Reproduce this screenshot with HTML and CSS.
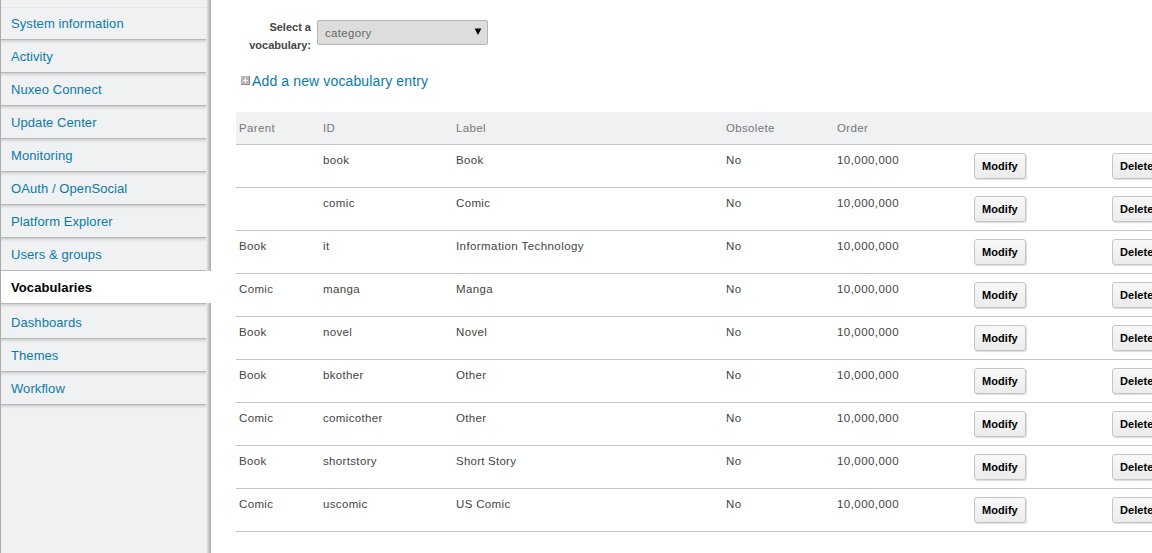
FILE: index.html
```html
<!DOCTYPE html>
<html lang="en">
<head>
<meta charset="utf-8">
<title>Vocabularies</title>
<link rel="stylesheet" href="styles.css">
</head>
<body>
<div class="page">
  <nav class="sidebar">
    <a class="item">System information</a>
    <a class="item">Activity</a>
    <a class="item">Nuxeo Connect</a>
    <a class="item">Update Center</a>
    <a class="item">Monitoring</a>
    <a class="item">OAuth / OpenSocial</a>
    <a class="item">Platform Explorer</a>
    <a class="item">Users &amp; groups</a>
    <a class="item selected">Vocabularies</a>
    <a class="item">Dashboards</a>
    <a class="item">Themes</a>
    <a class="item">Workflow</a>
    <div class="tail"></div>
  </nav>
  <main class="content">
    <div class="picker">
      <div class="picker-label">Select a<br>vocabulary:</div>
      <div class="select"><span>category</span><svg class="arrow" width="8" height="7" viewBox="0 0 8 7"><path d="M0.7 0.5H7.3L4.3 6.5H3.7Z"/></svg></div>
    </div>
    <a class="add"><svg width="9" height="9" viewBox="0 0 9 9"><rect width="9" height="9" fill="#b8b8b8"/><path d="M0 8.5H8.5V0" fill="none" stroke="#8d8d8d"/><path d="M4.5 2v5M2 4.5h5" stroke="#fff"/></svg><span>Add a new vocabulary entry</span></a>
    <div class="table">
      <div class="row head"><span>Parent</span><span>ID</span><span>Label</span><span>Obsolete</span><span>Order</span></div>
      <div class="row"><span></span><span>book</span><span>Book</span><span>No</span><span class="num">10,000,000</span><button>Modify</button><button>Delete</button></div>
      <div class="row"><span></span><span>comic</span><span>Comic</span><span>No</span><span class="num">10,000,000</span><button>Modify</button><button>Delete</button></div>
      <div class="row"><span>Book</span><span>it</span><span class="wide">Information Technology</span><span>No</span><span class="num">10,000,000</span><button>Modify</button><button>Delete</button></div>
      <div class="row"><span>Comic</span><span>manga</span><span>Manga</span><span>No</span><span class="num">10,000,000</span><button>Modify</button><button>Delete</button></div>
      <div class="row"><span>Book</span><span>novel</span><span>Novel</span><span>No</span><span class="num">10,000,000</span><button>Modify</button><button>Delete</button></div>
      <div class="row"><span>Book</span><span>bkother</span><span>Other</span><span>No</span><span class="num">10,000,000</span><button>Modify</button><button>Delete</button></div>
      <div class="row"><span>Comic</span><span>comicother</span><span>Other</span><span>No</span><span class="num">10,000,000</span><button>Modify</button><button>Delete</button></div>
      <div class="row"><span>Book</span><span>shortstory</span><span class="tight">Short Story</span><span>No</span><span class="num">10,000,000</span><button>Modify</button><button>Delete</button></div>
      <div class="row"><span>Comic</span><span>uscomic</span><span>US Comic</span><span>No</span><span class="num">10,000,000</span><button>Modify</button><button>Delete</button></div>
    </div>
  </main>
</div>
</body>
</html>
```
FILE: styles.css
```css
* { box-sizing: border-box; }
body { margin: 0; background: #fff; font-family: "Liberation Sans", Arial, sans-serif; overflow: hidden; }
.page { display: flex; height: 553px; }
.sidebar {
  width: 211px; height: 553px; flex: none; padding-top: 7px;
  border-left: 1px solid #a9a9a9;
  background: linear-gradient(to right, #f0f1f3 205px, #e4e5e6 206px, #d2d2d2 207px, #c6c6c6 208px, #b0b0b0 209px, #b0b0b0 210px);
}
.item {
  display: block; width: 205px; height: 33px; padding-left: 10px;
  background: linear-gradient(#c8c9ca, #dcddde 1px, #e9eaeb 3px, #f0f1f3 4px);
  border-bottom: 1px solid #b6b7b8;
  color: #0a7ba8; font-size: 13px; line-height: 33px; letter-spacing: .08px;
}
.item:first-child { background: #f0f1f3; border-top: 1px solid #e6e7e8; line-height: 31px; }
.item.selected { width: 210px; background: #fff; border-bottom-color: #fff; height: 32px; color: #000; font-weight: bold; letter-spacing: .1px; }
.item.selected + .item { height: 36px; line-height: 39px; border-top: 1px solid #b6b7b8; line-height: 37px; }
.tail { width: 205px; height: 4px; background: linear-gradient(#c8c9ca, #dcddde 1px, #e9eaeb 3px, #f0f1f3 4px); }
.content { width: 941px; flex: none; padding: 18px 0 0 25px; overflow: hidden; }
.picker { display: flex; height: 54px; }
.picker-label { width: 75px; margin-right: 6px; color: #444; font-size: 11px; font-weight: bold; line-height: 18px; text-align: right; }
.select {
  display: flex; align-items: center; justify-content: space-between;
  width: 171px; height: 25px; margin-top: 2px; padding: 1px 5px 0 7px;
  border: 1px solid #b5b5b5; border-radius: 2px; background: #ddd;
  color: #666; font-size: 11.5px; letter-spacing: .32px;
}
.arrow { margin-top: -3px; }
.add { display: flex; align-items: center; gap: 2px; height: 18px; padding-left: 5px; color: #0a7ba8; font-size: 14px; letter-spacing: .13px; }
.add svg { margin-top: -1px; }
.table { width: 1000px; margin-top: 22px; }
.row {
  display: grid; grid-template-columns: 84px 133px 270px 111px 137px 138px 100px;
  height: 43px; padding: 8px 0 0 3px; border-bottom: 1px solid #c4c4c4;
  color: #444; font-size: 11.5px; line-height: 15px; letter-spacing: .34px; align-items: start;
}
.row.head { height: 33px; background: #f0f1f3; color: #777; padding-top: 9px; }
.num { letter-spacing: .45px; }
.wide { letter-spacing: .42px; }
.tight { letter-spacing: .24px; }
button {
  width: 52px; height: 26px; padding: 0 0 0 7px; text-align: left;
  border: 1px solid #c4c4c4; border-radius: 3px;
  background: linear-gradient(#f8f8f8, #ececec); box-shadow: 1px 1px 1px #ddd;
  color: #000; font: bold 11px "Liberation Sans", Arial, sans-serif; letter-spacing: .06px;
}
```
